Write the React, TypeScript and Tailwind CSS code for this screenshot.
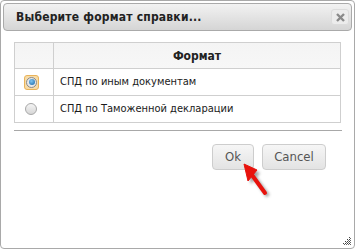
import React from "react";

const font = { fontFamily: '"DejaVu Sans Condensed", "DejaVu Sans", Verdana, sans-serif' };

function CloseButton() {
  return (
    <button className="flex h-[16px] w-[18px] items-center justify-center rounded-[3px] border border-[#dcdcdc] bg-[#ececec]">
      <svg width="9" height="9" viewBox="0 0 9 9">
        <path d="M1 1 L8 8 M8 1 L1 8" stroke="#8a8a8a" strokeWidth="2.4" />
      </svg>
    </button>
  );
}

function Radio({ checked }: { checked?: boolean }) {
  if (checked) {
    return (
      <span className="flex h-[15px] w-[15px] items-center justify-center rounded-[3px] border border-[#e9b35a] bg-[#f7dba6]">
        <span className="flex h-[11px] w-[11px] items-center justify-center rounded-full border border-[#8a8a8a] bg-[#e8e8e8]">
          <span className="h-[6px] w-[6px] rounded-full bg-[radial-gradient(circle_at_40%_35%,#7fc4f0,#1565a8)]" />
        </span>
      </span>
    );
  }
  return (
    <span className="ml-[1px] h-[12px] w-[12px] rounded-full border border-[#a8a8a8] bg-[linear-gradient(#f4f4f4,#d6d6d6)]" />
  );
}

function Arrow() {
  return (
    <svg
      className="pointer-events-none absolute left-[236px] top-[156px]"
      width="40"
      height="46"
      viewBox="0 0 40 46"
    >
      <defs>
        <filter id="sh" x="-50%" y="-50%" width="200%" height="200%">
          <feGaussianBlur stdDeviation="1.8" />
        </filter>
      </defs>
      <g transform="translate(3,3)" filter="url(#sh)" opacity="0.5">
        <path d="M16 19 L29 37" stroke="#444" strokeWidth="4" />
        <path d="M8 8 L21 14 L12 25 Z" fill="#444" />
      </g>
      <path d="M16 19 L29 37" stroke="#e8120c" strokeWidth="4" strokeLinecap="round" />
      <path d="M8 8 L21 14 L12 25 Z" fill="#e8120c" stroke="#e8120c" strokeWidth="1" strokeLinejoin="round" />
    </svg>
  );
}

export default function App() {
  return (
    <div className="relative h-[250px] w-[356px] bg-white" style={font}>
      <div className="flex h-[249px] w-[355px] flex-col rounded-[4px] border border-[#a9a9a9] bg-white p-[2px]">
        <div className="flex h-[28px] items-center justify-between rounded-[4px] border border-[#aaaaaa] bg-[linear-gradient(#f2f2f2,#d5d5d5)] pl-[12px] pr-[2px]">
          <span className="text-[12px] font-bold tracking-[0.2px] text-[#222]">
            Выберите формат справки...
          </span>
          <CloseButton />
        </div>

        <div className="px-[11px] pt-[11px]">
          <table className="w-[327px] border-collapse text-[11px] text-[#1a1a1a]">
            <thead>
              <tr className="h-[26px] bg-[linear-gradient(#f4f4f4,#f7f7f7)]">
                <th className="w-[39px] border border-[#cfcfcf]" />
                <th className="border border-[#cfcfcf] text-[12px] font-bold text-[#222]">
                  Формат
                </th>
              </tr>
            </thead>
            <tbody>
              <tr className="h-[27px]">
                <td className="border border-[#cfcfcf] pl-[9px]">
                  <div className="flex">
                    <Radio checked />
                  </div>
                </td>
                <td className="border border-[#cfcfcf] pl-[6px]">
                  СПД по иным документам
                </td>
              </tr>
              <tr className="h-[27px]">
                <td className="border border-[#cfcfcf] pl-[9px]">
                  <div className="flex">
                    <Radio />
                  </div>
                </td>
                <td className="border border-[#cfcfcf] pl-[6px]">
                  СПД по Таможенной декларации
                </td>
              </tr>
            </tbody>
          </table>

          <div className="mt-[7px] h-px w-[328px] bg-[#a8a8a8]" />

          <div className="mr-[15px] mt-[13px] flex justify-end gap-[8px]">
            <button className="h-[26px] w-[42px] rounded-[4px] border border-[#cdcdcd] bg-[linear-gradient(#f6f6f6,#e3e3e3)] text-[13px] text-[#555]">
              Ok
            </button>
            <button className="h-[26px] w-[64px] rounded-[4px] border border-[#cdcdcd] bg-[linear-gradient(#f6f6f6,#e3e3e3)] text-[13px] text-[#555]">
              Cancel
            </button>
          </div>
        </div>
      </div>

      <svg className="absolute left-[343px] top-[237px]" width="8" height="8" viewBox="0 0 8 8">
        {[0, 2, 4, 6].map((r) =>
          [0, 2, 4, 6].map((c) =>
            r + c >= 6 ? <rect key={`${r}-${c}`} x={c} y={r} width="1" height="1" fill="#444" /> : null,
          ),
        )}
        {[1, 3, 5, 7].map((r) =>
          [1, 3, 5, 7].map((c) =>
            r + c >= 7 ? <rect key={`b${r}-${c}`} x={c} y={r} width="1" height="1" fill="#666" /> : null,
          ),
        )}
      </svg>

      <Arrow />
    </div>
  );
}
